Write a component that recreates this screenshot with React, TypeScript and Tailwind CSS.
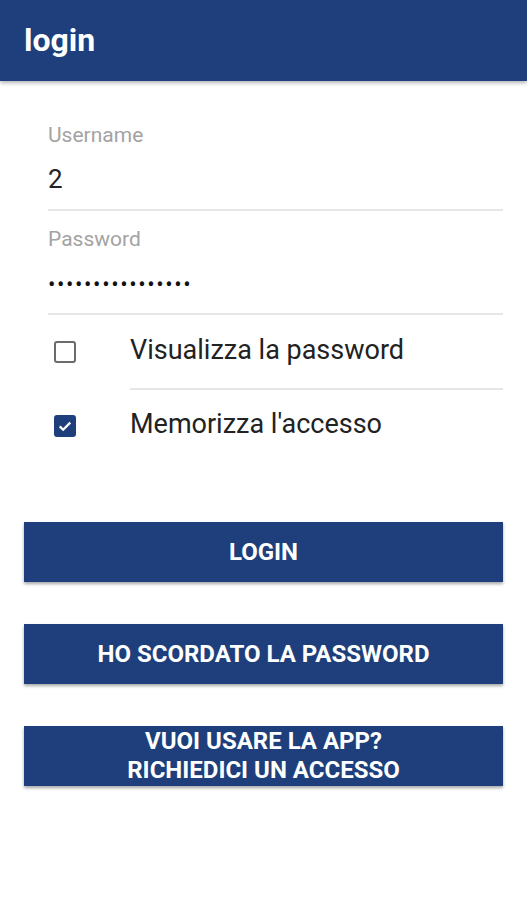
import React, { useState } from 'react';

const font = { fontFamily: 'Roboto, "Noto Sans", sans-serif' };

const Checkbox: React.FC<{ checked: boolean; onChange: () => void }> = ({ checked, onChange }) => (
  <button
    type="button"
    onClick={onChange}
    className={`w-[22px] h-[22px] shrink-0 rounded-[3px] flex items-center justify-center ${
      checked ? 'bg-[#1e3f7b]' : 'border-2 border-[#6b6b6b] bg-white'
    }`}
  >
    {checked && (
      <svg viewBox="0 0 24 24" className="w-[18px] h-[18px]" fill="none" stroke="white" strokeWidth="3">
        <path d="M5 12.5l4.5 4.5L19 7.5" />
      </svg>
    )}
  </button>
);

const App: React.FC = () => {
  const [showPwd, setShowPwd] = useState(false);
  const [remember, setRemember] = useState(true);

  const btn =
    'h-[60px] w-full bg-[#1e3f7b] text-white font-bold text-[24px] uppercase shadow-[0_2px_3px_rgba(0,0,0,0.35)]';

  return (
    <div className="w-[527px] h-[900px] bg-white" style={font}>
      <header className="h-[81px] bg-[#1e3f7b] flex items-center px-6 shadow-[0_2px_4px_rgba(0,0,0,0.3)]">
        <h1 className="text-white text-[32px] font-bold leading-none -mt-[1px]">login</h1>
      </header>

      <div className="pl-12 pr-6 pt-[42px]">
        <label className="block text-[21px] leading-[24px] text-[#a3a3a3]">Username</label>
        <div className="pt-[17px] pb-[15px] text-[26px] leading-[30px] text-[#222]">2</div>
        <div className="h-[2px] bg-[#e6e6e6]" />

        <label className="block pt-[16px] text-[21px] leading-[24px] text-[#a3a3a3]">Password</label>
        <div className="pt-[24px] pb-[18px] text-[22px] leading-[20px] tracking-[1.6px] text-[#111]">
          {showPwd ? 'password12345678' : '••••••••••••••••'}
        </div>
        <div className="h-[2px] bg-[#e6e6e6]" />
      </div>

      <div className="pl-[54px] pr-6 pt-[25px]">
        <div className="flex items-center h-[24px]">
          <Checkbox checked={showPwd} onChange={() => setShowPwd(!showPwd)} />
          <span className="ml-[54px] text-[27px] leading-[24px] text-[#222] -mt-[5px] whitespace-nowrap">
            Visualizza la password
          </span>
        </div>
        <div className="ml-[76px] mt-[24px] h-[2px] bg-[#e6e6e6]" />
        <div className="flex items-center h-[24px] mt-[24px]">
          <Checkbox checked={remember} onChange={() => setRemember(!remember)} />
          <span className="ml-[54px] text-[27px] leading-[24px] text-[#222] -mt-[5px] whitespace-nowrap">
            Memorizza l'accesso
          </span>
        </div>
      </div>

      <div className="px-6 pt-[84px] flex flex-col gap-[42px]">
        <button className={btn}>Login</button>
        <button className={btn}>Ho scordato la password</button>
        <button className={`${btn} leading-[29px]`}>
          Vuoi usare la app?
          <br />
          Richiedici un accesso
        </button>
      </div>
    </div>
  );
};

export default App;
